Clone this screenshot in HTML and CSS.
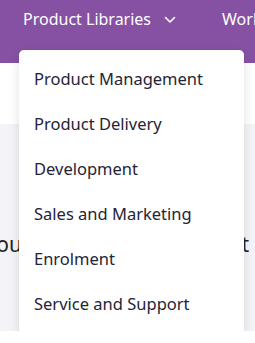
FILE: index.html
```html
<!DOCTYPE html>
<html lang="en">
<head>
    <meta charset="UTF-8">
    <meta name="viewport" content="width=device-width, initial-scale=1.0">
    <title>Product Libraries</title>
    <link rel="stylesheet" href="styles.css">
</head>
<body>

    <header class="topbar">
        <nav class="nav">
            <div class="nav-item open">
                <button class="nav-link">
                    Product Libraries
                    <svg class="chevron" width="12" height="8" viewBox="0 0 12 8">
                        <path d="M1.5 1.5 L6 6 L10.5 1.5" fill="none" stroke="#fff" stroke-width="1.6" stroke-linecap="round" stroke-linejoin="round"/>
                    </svg>
                </button>
                <ul class="dropdown">
                    <li><a href="#">Product Management</a></li>
                    <li><a href="#">Product Delivery</a></li>
                    <li><a href="#">Development</a></li>
                    <li><a href="#">Sales and Marketing</a></li>
                    <li><a href="#">Enrolment</a></li>
                    <li><a href="#">Service and Support</a></li>
                </ul>
            </div>
            <div class="nav-item">
                <button class="nav-link">Workspaces</button>
            </div>
        </nav>
    </header>

    <section class="intro"></section>

    <section class="feature">
        <h2 class="feature-title">Your product development</h2>
    </section>

</body>
</html>
```

FILE: styles.css
```css
body {
    margin: 0;
    font-family: "Noto Sans", "Open Sans", sans-serif;
    background-color: #fff;
    overflow: hidden;
}

.topbar {
    height: 63px;
    background-color: #8651a3;
}

.nav {
    display: flex;
    align-items: flex-start;
    height: 100%;
    padding-left: 23px;
    padding-top: 8px;
    box-sizing: border-box;
    gap: 46px;
    white-space: nowrap;
}

.nav-item {
    position: relative;
}

.nav-link {
    display: flex;
    align-items: center;
    gap: 13px;
    padding: 0;
    background: none;
    border: none;
    color: #fff;
    font-family: inherit;
    font-size: 16px;
    line-height: 22px;
    cursor: pointer;
}

.chevron {
    margin-top: 2px;
}

.dropdown {
    position: absolute;
    top: 42px;
    left: -4px;
    z-index: 10;
    width: 225px;
    margin: 0;
    padding: 6px 0 7px;
    list-style: none;
    background-color: #fff;
    border-radius: 5px;
    box-shadow: 0 4px 12px rgba(0, 0, 0, 0.12);
}

.dropdown a {
    display: block;
    height: 45px;
    line-height: 45px;
    padding-left: 15px;
    color: #242436;
    font-size: 16.5px;
    text-decoration: none;
}

.intro {
    height: 61px;
}

.feature {
    height: 207px;
    background-color: #f4f3f8;
    display: flex;
    justify-content: flex-end;
    padding: 106px 6px 0 0;
    box-sizing: border-box;
}

.feature-title {
    flex-shrink: 0;
    margin: 0;
    font-size: 21px;
    font-weight: 400;
    color: #222;
    white-space: nowrap;
}
```
